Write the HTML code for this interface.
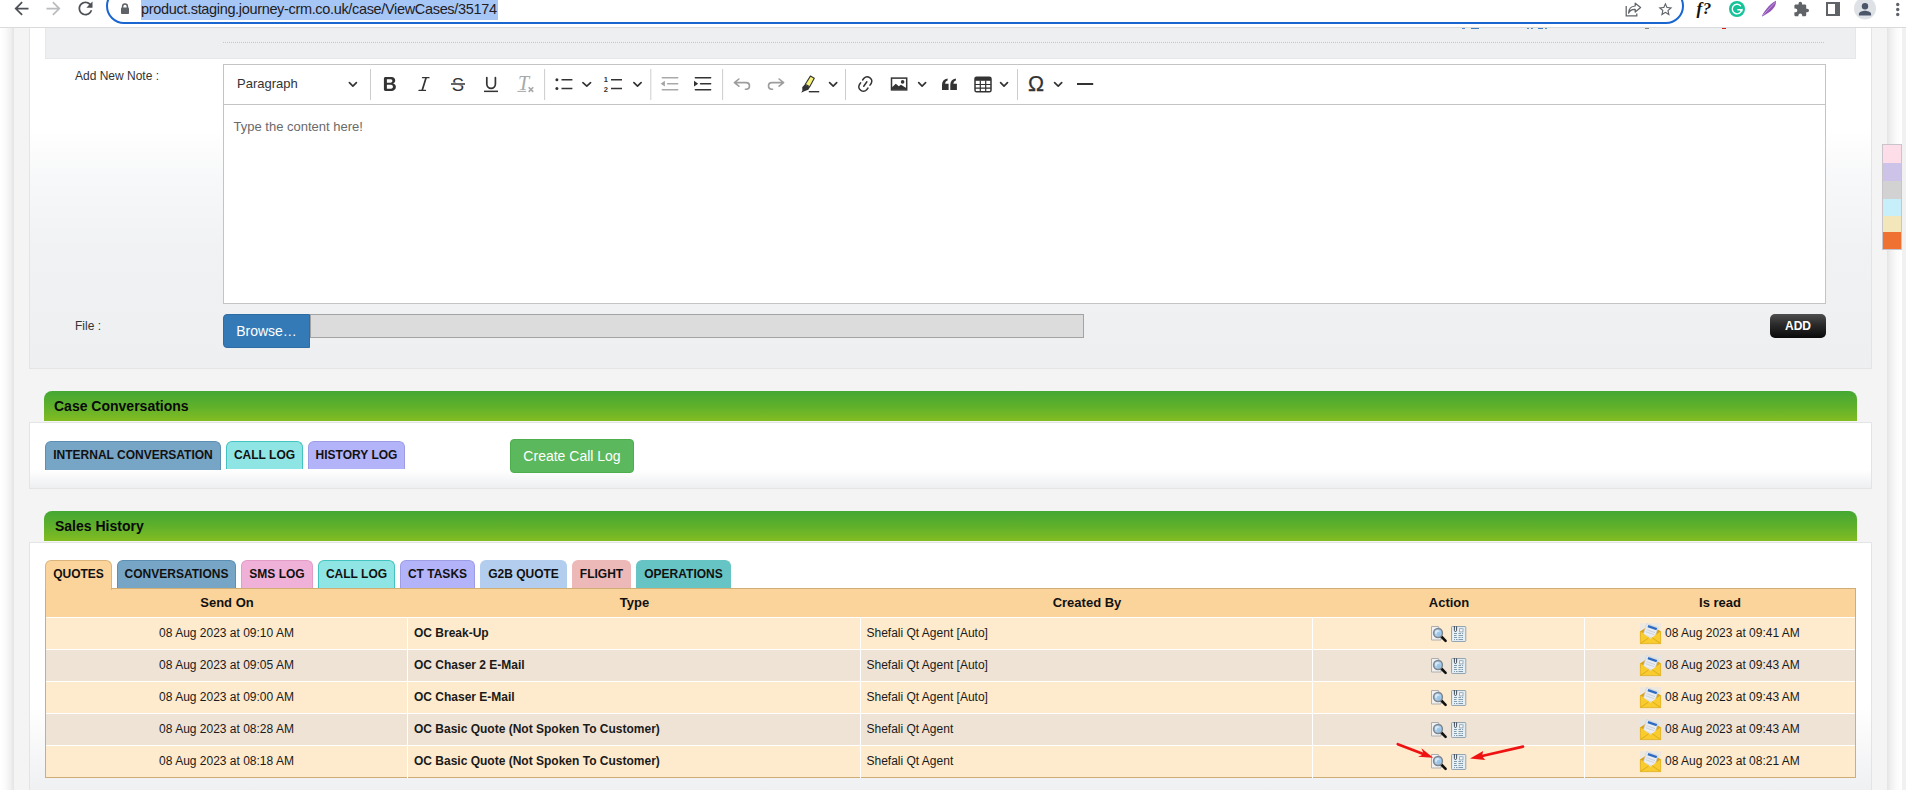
<!DOCTYPE html>
<html lang="en">
<head>
<meta charset="utf-8">
<title>View Case 35174</title>
<style>
*{box-sizing:border-box;margin:0;padding:0}
html,body{width:1906px;height:790px;overflow:hidden;background:#fff}
body{position:relative;font-family:"Liberation Sans",Arial,sans-serif;font-size:12px;color:#222}
.abs{position:absolute}
/* ---------- browser chrome ---------- */
#chrome{position:absolute;left:0;top:0;width:1906px;height:28px;background:#fff;border-bottom:1px solid #d9dadc;z-index:20}
#pill{position:absolute;left:106px;top:-12px;width:1578px;height:36px;border:2px solid #1a66d1;border-radius:18px;background:#fff}
#urlsel{position:absolute;left:141px;top:0;width:357px;height:20px;background:#a6c6f6}
#url{position:absolute;left:141px;top:0px;height:19px;line-height:19px;font-size:14.5px;color:#1f2023;white-space:nowrap;letter-spacing:-0.335px}
#chrome svg{position:absolute;overflow:visible}
/* ---------- page ---------- */
#page{position:absolute;left:0;top:28px;width:1906px;height:762px;overflow:hidden;background:#fff}
#shadL{position:absolute;left:0;top:0;width:14px;height:762px;background:linear-gradient(to right,#ffffff 0%,#fbfbfb 35%,#f0f0f0 75%,#e4e4e4 100%)}
#wrap{position:absolute;left:14px;top:0;width:1874px;height:762px;background:#f4f4f4}
#shadR{position:absolute;left:1887px;top:0;width:15px;height:762px;background:linear-gradient(to right,#e4e4e4 0%,#f0f0f0 25%,#fbfbfb 65%,#ffffff 100%)}
#sbar{position:absolute;left:1902px;top:0;width:4px;height:762px;background:#f1f1f1}

/* ---------- note panel ---------- */
#box1{position:absolute;left:29px;top:-40px;width:1843px;height:381px;border:1px solid #e3e4e6;background:linear-gradient(to bottom,#ffffff 0%,#ffffff 37%,#f7f8f9 50%,#f1f2f4 68%,#eeeff1 100%)}
#prev{position:absolute;left:45px;top:-20px;width:1811px;height:51px;background:#eeeff1;border:1px solid #e6e7e9}
#dots{position:absolute;left:223px;top:14px;width:1602px;height:1px;background:repeating-linear-gradient(to right,#c6c7c9 0,#c6c7c9 1px,transparent 1px,transparent 2px)}
.mk{position:absolute;top:0;height:1px}
.lbl{position:absolute;font-size:12px;color:#333;white-space:nowrap;line-height:14px}
#ed{position:absolute;left:223px;top:36px;width:1603px;height:240px;background:#fff;border:1px solid #c4c4c4}
#edbar{position:absolute;left:0;top:0;width:1601px;height:40px;border-bottom:1px solid #c4c4c4;background:#fff}
#edbar svg{position:absolute;overflow:visible}
#para{position:absolute;left:13px;top:11px;font-size:13px;line-height:16px;color:#333}
#ph{position:absolute;left:9.5px;top:54px;font-size:13px;line-height:16px;color:#6a6a6a;white-space:nowrap}
#browse{position:absolute;left:223px;top:286px;width:87px;height:34px;background:#337ab7;border:1px solid #2e6da4;border-radius:4px 0 0 4px;color:#fff;font-size:14px;line-height:32px;text-align:center}
#finput{position:absolute;left:310px;top:286px;width:774px;height:24px;background:#dcdcdc;border:1px solid #a3a3a3}
#add{position:absolute;left:1770px;top:286px;width:56px;height:24px;border-radius:5px;background:linear-gradient(to bottom,#4e4e4e 0%,#2a2a2a 45%,#0a0a0a 100%);color:#fff;font-weight:bold;font-size:12px;line-height:24px;text-align:center}
/* ---------- green section headers ---------- */
.ghead{position:absolute;left:44px;width:1813px;height:30px;border-radius:8px 8px 0 0;background:linear-gradient(to bottom,#44a733 0%,#5fb02b 50%,#82bc22 100%);font-weight:bold;font-size:14px;color:#0a0a0a;line-height:30px;padding-left:10px;white-space:nowrap}
.wbox{position:absolute;left:29px;width:1843px;border:1px solid #e3e4e6;background:#fff}
.tab{position:absolute;height:29px;border:1px solid;border-bottom:none;border-radius:6px 6px 0 0;font-weight:bold;font-size:12px;line-height:27px;text-align:center;color:#111;white-space:nowrap}
#ccl{position:absolute;left:510px;top:411px;width:124px;height:34px;background:#5cb85c;border:1px solid #4cae4c;border-radius:4px;color:#fff;font-size:14px;line-height:32px;text-align:center}

/* ---------- sales table ---------- */
#tbl{position:absolute;left:45px;top:560px;width:1811px;height:190px;border:1px solid #d1ad76;background:#fff}
#thead{position:absolute;left:0;top:0;width:1809px;height:28px;background:#fbd49b}
#thead div{position:absolute;top:0;height:28px;line-height:27px;text-align:center;font-weight:bold;font-size:13px;color:#111}
.row{position:absolute;left:0;width:1809px;height:31px}
.row.o{background:#feeacc}
.row.e{background:#efe3d5}
.row div{position:absolute;top:0;height:31px;line-height:30px;font-size:12px;color:#1a1a1a;white-space:nowrap}
.row .vs{top:0;width:1px;height:32px;background:#fff}
.row .c1{left:0;width:361px;text-align:center}
.row .c2{left:368px;font-weight:bold}
.row .c3{left:820.5px}
.row .c5{left:1619px}
.row svg{position:absolute;overflow:visible}
</style>
</head>
<body>
<div id="chrome">
  <div id="pill"></div>
  <div id="urlsel"></div>

  <svg style="left:10.5px;top:-2px" width="21" height="21" viewBox="0 0 24 24"><path fill="#4d5156" d="M20 11H7.83l5.59-5.59L12 4l-8 8 8 8 1.41-1.41L7.83 13H20v-2z"/></svg>
  <svg style="left:42.5px;top:-2px" width="21" height="21" viewBox="0 0 24 24"><path fill="#babcbe" d="M12 4l-1.41 1.41L16.17 11H4v2h12.17l-5.58 5.59L12 20l8-8z"/></svg>
  <svg style="left:74.5px;top:-2px" width="21" height="21" viewBox="0 0 24 24"><path fill="#4d5156" d="M17.65 6.35C16.2 4.9 14.21 4 12 4c-4.42 0-7.99 3.58-7.99 8s3.57 8 7.99 8c3.73 0 6.84-2.55 7.73-6h-2.08c-.82 2.33-3.04 4-5.65 4-3.31 0-6-2.69-6-6s2.69-6 6-6c1.66 0 3.14.69 4.22 1.78L13 11h7V4l-2.35 2.35z"/></svg>
  <svg style="left:120px;top:3px" width="10" height="12" viewBox="0 0 10 12"><path fill="none" stroke="#5f6368" stroke-width="1.5" d="M2.6 5V3.4a2.4 2.4 0 0 1 4.8 0V5"/><rect x="1" y="4.6" width="8" height="6.4" rx="0.8" fill="#5f6368"/></svg>
  <svg style="left:1625px;top:2px" width="17" height="15" viewBox="0 0 17 15"><path fill="none" stroke="#5f6368" stroke-width="1.25" stroke-linejoin="round" d="M10.2 1.2 15.6 5.6 10.2 10V7.3C6.6 7.1 4.6 8.6 3.6 11.2 3.7 6.9 6 4.3 10.2 4z"/><path fill="none" stroke="#5f6368" stroke-width="1.25" d="M1.2 4v9.8h10.6v-2.4"/></svg>
  <svg style="left:1656.6px;top:1.1px" width="16.8" height="16.8" viewBox="0 0 24 24"><path fill="#5f6368" d="M22 9.24l-7.19-.62L12 2 9.19 8.63 2 9.24l5.46 4.73L5.820 21 12 17.27 18.18 21l-1.63-7.03L22 9.24zM12 15.4l-3.76 2.27 1-4.28-3.32-2.88 4.380-.38L12 6.1l1.71 4.04 4.380.38-3.32 2.88 1 4.28L12 15.400z"/></svg>
  <div style="position:absolute;left:1696.5px;top:-1px;font-family:'Liberation Serif','DejaVu Serif',serif;font-style:italic;font-weight:bold;font-size:17px;line-height:20px;color:#111;letter-spacing:0.5px">f?</div>
  <svg style="left:1729px;top:1px" width="16" height="16" viewBox="0 0 16 16"><circle cx="8" cy="8" r="8" fill="#15c39a"/><path fill="none" stroke="#fff" stroke-width="1.400" stroke-linecap="round" d="M11.500 4.700A4.800 4.800 0 1 0 12.800 8.700H8.800"/><path fill="#fff" d="M13.300 7.400 13.700 10.600 10.900 9.700z"/></svg>
  <svg style="left:1761px;top:0px" width="16" height="17" viewBox="0 0 16 17"><path fill="#9255b8" d="M15 .8C15.300 4.800 13.200 8.700 9.300 11.400 6.900 13 4.200 14.500 1.300 16.400L.9 15.800C2.100 13.400 3.400 11.300 5.400 8.900 8 5.700 11.300 2.600 15 .8z"/><path fill="none" stroke="#c9a6e0" stroke-width=".8" d="M1.600 15.600C5.500 11.500 10 6.600 14.300 2.200"/></svg>
  <svg style="left:1792.6px;top:1.3px" width="16.7" height="16.700" viewBox="0 0 24 24"><path fill="#5f6368" d="M20.500 11H19V7c0-1.100-.9-2-2-2h-4V3.500C13 2.120 11.880 1 10.500 1S8 2.120 8 3.500V5H4c-1.100 0-1.990.9-1.990 2v3.800H3.500c1.490 0 2.700 1.210 2.700 2.700s-1.210 2.700-2.700 2.700H2V20c0 1.100.9 2 2 2h3.800v-1.500c0-1.490 1.210-2.700 2.700-2.700 1.490 0 2.700 1.210 2.700 2.700V22H17c1.100 0 2-.9 2-2v-4h1.500c1.380 0 2.500-1.120 2.500-2.500S21.880 11 20.500 11z"/></svg>
  <svg style="left:1826px;top:2px" width="14" height="14" viewBox="0 0 14 14"><rect x="1" y="1" width="12" height="12" fill="#fff" stroke="#5f6368" stroke-width="2"/><rect x="9" y="0" width="5" height="14" fill="#5f6368"/></svg>
  <svg style="left:1854px;top:-3px" width="22" height="22" viewBox="0 0 22 22"><circle cx="11" cy="11.400" r="11" fill="#dee1e6"/><circle cx="11" cy="9.200" r="3.200" fill="#4c566a"/><path fill="#4c566a" d="M4.900 18.400v-1.400c0-2.100 4.100-3.200 6.100-3.200s6.100 1.100 6.100 3.200v1.400z"/></svg>
  <svg style="left:1895px;top:2px" width="6" height="15" viewBox="0 0 6 15"><circle cx="2.700" cy="2.500" r="1.700" fill="#5f6368"/><circle cx="2.700" cy="7.500" r="1.700" fill="#5f6368"/><circle cx="2.700" cy="12.500" r="1.700" fill="#5f6368"/></svg>
  <div id="url">product.staging.journey-crm.co.uk/case/ViewCases/35174</div>
</div>
<div id="page">
  <div id="shadL"></div>
  <div id="wrap"></div>
  <div id="shadR"></div>
  <div id="sbar"></div>

  <div id="box1"></div>
  <div id="prev"></div>
  <div id="dots"></div>
  <div class="mk" style="left:1462px;width:3px;background:#5b8fc4"></div>
  <div class="mk" style="left:1471px;width:8px;background:#3f7fbd"></div>
  <div class="mk" style="left:1527px;width:2px;background:#5b8fc4"></div>
  <div class="mk" style="left:1531px;width:2px;background:#5b8fc4"></div>
  <div class="mk" style="left:1538px;width:5px;background:#3f7fbd"></div>
  <div class="mk" style="left:1545px;width:2px;background:#5b8fc4"></div>
  <div class="mk" style="left:1645px;width:4px;background:#8c8377"></div>
  <div class="mk" style="left:1722px;width:4px;background:#d51b1b"></div>

  <div class="lbl" style="left:75px;top:41px">Add New Note :</div>
  <div id="ed">
    <div id="edbar">
      <div id="para">Paragraph</div>
      <svg style="left:0;top:0" width="1601" height="40" viewBox="224 65 1601 40"><rect x="370.0" y="69" width="1" height="31" fill="#cdcdcd"/><rect x="544.1" y="69" width="1" height="31" fill="#cdcdcd"/><rect x="650.3" y="69" width="1" height="31" fill="#cdcdcd"/><rect x="722.1" y="69" width="1" height="31" fill="#cdcdcd"/><rect x="845.0" y="69" width="1" height="31" fill="#cdcdcd"/><rect x="1017.0" y="69" width="1" height="31" fill="#cdcdcd"/><path d="M349.4 82.7L352.9 86.1L356.4 82.7" fill="none" stroke="#333" stroke-width="1.7" stroke-linecap="round" stroke-linejoin="round"/><path d="M582.9 82.7L586.8 86.1L590.6 82.7" fill="none" stroke="#333" stroke-width="1.7" stroke-linecap="round" stroke-linejoin="round"/><path d="M633.9 82.7L637.5 86.1L641.1 82.7" fill="none" stroke="#333" stroke-width="1.7" stroke-linecap="round" stroke-linejoin="round"/><path d="M829.6 82.7L833.2 86.1L836.7 82.7" fill="none" stroke="#333" stroke-width="1.7" stroke-linecap="round" stroke-linejoin="round"/><path d="M918.7 82.7L922.1 86.1L925.6 82.7" fill="none" stroke="#333" stroke-width="1.7" stroke-linecap="round" stroke-linejoin="round"/><path d="M1000.6 82.7L1004.0 86.1L1007.5 82.7" fill="none" stroke="#333" stroke-width="1.7" stroke-linecap="round" stroke-linejoin="round"/><path d="M1054.6 82.7L1058.2 86.1L1061.7 82.7" fill="none" stroke="#333" stroke-width="1.7" stroke-linecap="round" stroke-linejoin="round"/><g transform="translate(379.9,74)"><path fill="#333" d="M10.187 17H5.773c-.637 0-1.092-.138-1.364-.415-.273-.277-.409-.718-.409-1.323V4.738c0-.617.14-1.062.419-1.332.279-.27.73-.406 1.354-.406h4.68c.69 0 1.288.041 1.793.124.506.083.96.242 1.36.478.341.197.644.447.906.75a3.262 3.262 0 0 1 .808 2.162c0 1.401-.722 2.426-2.167 3.075C15.05 10.175 16 11.315 16 13.01a3.756 3.756 0 0 1-2.296 3.504 6.1 6.1 0 0 1-1.517.377c-.571.073-1.238.11-2 .11zm-.217-6.217H7v4.087h3.069c1.977 0 2.965-.69 2.965-2.072 0-.707-.256-1.22-.768-1.537-.512-.319-1.277-.478-2.296-.478zM7 5.130v3.619h2.606c.729 0 1.292-.067 1.69-.2a1.600 1.600 0 0 0 .91-.765c.165-.267.247-.566.247-.897 0-.707-.26-1.176-.778-1.409-.519-.232-1.310-.348-2.375-.348H7z"/></g><g fill="none" stroke="#333" stroke-linecap="round"><path d="M422.500 77.700H429" stroke-width="1.300"/><path d="M419 90.400H425.500" stroke-width="1.300"/><path d="M426 77.900L422.200 90.200" stroke-width="1.700"/></g><text x="458" y="90.700" font-family="Liberation Sans, Arial, sans-serif" font-size="18.500" text-anchor="middle" fill="#333">S</text><rect x="450" y="82.600" width="16" height="2.800" fill="#fff"/><rect x="451" y="83.250" width="14" height="1.500" fill="#333"/><path d="M486.800 77.600v6.400a4.300 4.300 0 0 0 8.600 0v-6.400" fill="none" stroke="#333" stroke-width="1.700" stroke-linecap="round"/><rect x="484" y="90.600" width="14" height="1.500" fill="#333"/><text x="518" y="90" font-family="Liberation Serif, DejaVu Serif, serif" font-style="italic" font-size="20" fill="#a8a8a8">T</text><rect x="517.400" y="90.900" width="8.800" height="1" fill="#a8a8a8"/><path d="M528.700 87.300l4.500 4.600M533.200 87.300l-4.500 4.600" stroke="#a8a8a8" stroke-width="1.600" fill="none"/><circle cx="556.900" cy="79.700" r="1.500" fill="#333"/><circle cx="556.900" cy="88.500" r="1.500" fill="#333"/><path d="M561.500 79.700H572.400M561.500 88.500H572.400" stroke="#333" stroke-width="1.500" fill="none"/><text x="603.800" y="82.300" font-family="Liberation Sans, Arial, sans-serif" font-weight="bold" font-size="7.500" fill="#333">1</text><text x="603.800" y="91.800" font-family="Liberation Sans, Arial, sans-serif" font-weight="bold" font-size="7.500" fill="#333">2</text><path d="M611 79.700H622M611 88.500H622" stroke="#333" stroke-width="1.500" fill="none"/><path d="M662.300 77.700H677.700M667.600 83.700H677.700M662.300 89.700H677.700" stroke="#a9a9a9" stroke-width="1.500" stroke-linecap="round" fill="none"/><path d="M660.700 83.700l4.200-2.900v5.800z" fill="#a3a3a3"/><path d="M695.400 77.700H710.600M700.600 83.700H710.600M695.400 89.700H710.600" stroke="#333" stroke-width="1.600" stroke-linecap="round" fill="none"/><path d="M698.200 83.700l-4.200-2.900v5.800z" fill="#333"/><path d="M738.900 79L734.400 82.600L738.900 86.200M734.600 82.600H746.200a3.300 3.300 0 0 1 0 6.600h-.8" stroke="#9d9d9d" stroke-width="1.600" fill="none" stroke-linecap="round" stroke-linejoin="round"/><path d="M779.100 79L783.600 82.600L779.100 86.200M783.400 82.600H771.800a3.300 3.300 0 0 0 0 6.600h.8" stroke="#9d9d9d" stroke-width="1.600" fill="none" stroke-linecap="round" stroke-linejoin="round"/><g><path d="M810.400 76.100L814.300 78.200L809.700 86.700L805.300 84.300Z" fill="#f6f27a" stroke="#333" stroke-width="1.100" stroke-linejoin="round"/><path d="M804.700 84.500L809.900 87.300L808.300 89.800L804.300 91.200L801.200 92.800L802.400 90.400L802.200 87.200Z" fill="#333"/><rect x="808.800" y="91" width="10.400" height="1.400" fill="#333"/></g><g transform="translate(855.300,74)"><path fill="#333" d="m11.077 15 .991-1.416a.75.75 0 1 1 1.229.860l-1.148 1.640a.748.748 0 0 1-.217.206 5.251 5.251 0 0 1-8.503-5.955.741.741 0 0 1 .12-.274l1.147-1.639a.75.75 0 1 1 1.228.860L4.933 10.700l.006.003a3.750 3.750 0 0 0 6.132 4.294l.006.004zm5.494-5.335a.748.748 0 0 1-.12.274l-1.147 1.639a.75.75 0 1 1-1.228-.860l.860-1.230a3.750 3.750 0 0 0-6.144-4.301l-.860 1.229a.75.75 0 0 1-1.229-.860l1.148-1.640a.748.748 0 0 1 .217-.206 5.251 5.251 0 0 1 8.503 5.955zm-4.563-2.532a.75.75 0 0 1 .184 1.045l-3.155 4.505a.75.75 0 1 1-1.229-.860l3.155-4.506a.75.75 0 0 1 1.045-.184z"/></g><rect x="891.500" y="78.100" width="15.200" height="11.800" fill="#fff" stroke="#333" stroke-width="1.500"/><path d="M892 89.500v-2.200l3.800-3.600 3 2.600 2.200-1.600 5.200 3.200v1.600z" fill="#333"/><circle cx="902.600" cy="81.900" r="1.800" fill="#333"/><path transform="translate(942,78.500)" d="M0 11.500V6.200C0 2.800 1.900.600 5.600 0V1.900C4 2.400 3.200 3.500 3.100 5.300H6.600V11.500Z" fill="#333"/><path transform="translate(950.300,78.500)" d="M0 11.500V6.200C0 2.800 1.900.600 5.600 0V1.900C4 2.400 3.200 3.500 3.100 5.300H6.600V11.500Z" fill="#333"/><rect x="975" y="77.200" width="16" height="14.600" rx="1.600" fill="#fff" stroke="#333" stroke-width="1.500"/><rect x="975" y="77.200" width="16" height="3.600" fill="#333"/><path d="M980.300 80.500V91.800M985.700 80.500V91.800M975 84.500H991M975 88.200H991" stroke="#333" stroke-width="1.200" fill="none"/><text x="1036" y="91" font-family="Liberation Sans, Arial, sans-serif" font-size="21.500" text-anchor="middle" fill="#333" stroke="#333" stroke-width=".25">&#937;</text><rect x="1077" y="83" width="16.200" height="2" fill="#333"/></svg>
    </div>
    <div id="ph">Type the content here!</div>
  </div>
  <div class="lbl" style="left:75px;top:291px">File :</div>
  <div id="browse">Browse&#8230;</div>
  <div id="finput"></div>
  <div id="add">ADD</div>

  <div class="ghead" style="top:363px">Case Conversations</div>
  <div class="wbox" style="top:394px;height:67px;background:linear-gradient(to bottom,#fff 0%,#fff 72%,#eeeff1 100%)"></div>
  <div class="tab" style="left:45px;top:413px;width:176px;height:29px;background:#77a5c6;border-color:#5d8fb4">INTERNAL CONVERSATION</div>
  <div class="tab" style="left:226px;top:413px;width:77px;height:28px;background:#8ee5e3;border-color:#45c3c0">CALL LOG</div>
  <div class="tab" style="left:308px;top:413px;width:97px;height:28px;background:#b3b3fa;border-color:#9d9de6">HISTORY LOG</div>
  <div id="ccl">Create Call Log</div>

  <div class="ghead" style="top:483px;padding-left:11px">Sales History</div>
  <div class="wbox" style="top:514px;height:300px;background:linear-gradient(to bottom,#fff 0%,#fff 55%,#eeeff1 85%)"></div>
  <div class="tab" style="left:45px;top:532px;width:67px;height:30px;z-index:3;background:#fbd49b;border-color:#d9b47c">QUOTES</div>
  <div class="tab" style="left:117px;top:532px;width:119px;height:28px;background:#77a5c6;border-color:#5d8fb4">CONVERSATIONS</div>
  <div class="tab" style="left:241px;top:532px;width:72px;height:28px;background:#f0b1d8;border-color:#e39bc8">SMS LOG</div>
  <div class="tab" style="left:318px;top:532px;width:77px;height:28px;background:#8ee5e3;border-color:#45c3c0">CALL LOG</div>
  <div class="tab" style="left:400px;top:532px;width:75px;height:28px;background:#b3b3fa;border-color:#9d9de6">CT TASKS</div>
  <div class="tab" style="left:480px;top:532px;width:87px;height:28px;background:#b3cdee;border-color:#b3cdee">G2B QUOTE</div>
  <div class="tab" style="left:572px;top:532px;width:59px;height:28px;background:#edb8b8;border-color:#edb8b8">FLIGHT</div>
  <div class="tab" style="left:636px;top:532px;width:95px;height:28px;background:#67c4c4;border-color:#67c4c4">OPERATIONS</div>
  <div id="tbl">
    <div id="thead"><div style="left:0;width:362px">Send On</div><div style="left:362px;width:453px">Type</div><div style="left:815px;width:452px">Created By</div><div style="left:1267px;width:272px">Action</div><div style="left:1539px;width:270px">Is read</div></div>
    <div class="row o" style="top:29px"><div class="c1">08 Aug 2023 at 09:10 AM</div><div class="c2">OC Break-Up</div><div class="c3">Shefali Qt Agent [Auto]</div><svg style="left:1385px;top:8px" width="16" height="16" viewBox="0 0 16 16"><path d="M.5.500h7l2.500 2.500v11H.5z" fill="#f1f1f1" stroke="#aeaeae" stroke-width="1"/><path d="M7.500.500v2.500h2.500" fill="#fafafa" stroke="#b3b3b3" stroke-width=".8"/><path d="M10.300 10.500l4.300 4.300" stroke="#111" stroke-width="2.600" stroke-linecap="round"/><circle cx="7" cy="7" r="4.400" fill="#a9cdeb" stroke="#7d848c" stroke-width="1.500"/><circle cx="6.300" cy="6.200" r="2.300" fill="#d6e9f8"/><circle cx="7.600" cy="7.700" r="2" fill="#8dbbe3" opacity=".7"/></svg><svg style="left:1405px;top:8px" width="16" height="16" viewBox="0 0 16 16"><rect x=".5" y=".500" width="14.300" height="15" rx=".8" fill="#dde8ee" stroke="#93a6b2" stroke-width="1"/><rect x="1.600" y="1.600" width="12.100" height="12.800" fill="#eaf1f5"/><path d="M3.400 0v4.400a1.100 1.100 0 0 0 2.200 0V.300" fill="none" stroke="#3f4c57" stroke-width="1"/><rect x="8.600" y="2.700" width="3.400" height="3.200" fill="#f7fafc" stroke="#8fa4b1" stroke-width=".9"/><path d="M3 7.500h3M7.500 7.500h2.500M11 7.500h1.200M3 9.500h2.500M7.500 9.500h4.600M3 11.500h3M7.500 11.500h2M10.500 11.500h1.600M3 13.500h1M5 13.500h1.500M7.500 13.500h4.600" stroke="#7f9bad" stroke-width="1" fill="none"/></svg><svg style="left:1594px;top:5px" width="21" height="21" viewBox="0 0 21 21"><rect x="0" y="0" width="21" height="10" fill="#e3e6ea" opacity=".6"/><path d="M.4 8.200L10.500 1.800 20.600 8.200V12H.4z" fill="#d9a21a"/><path d="M6.800.700L18.200 4.600 14.400 15.600 3 11.700z" fill="#e9edf1" stroke="#c2c9d1" stroke-width=".5"/><path d="M8.300 1.900L17.200 5 16.400 7.300 7.500 4.200z" fill="#2d6cc2"/><path d="M6.400 6.600l8.600 3M5.700 8.700l8.600 3" stroke="#c5ccd4" stroke-width=".8"/><path d="M.4 8.200L10.500 15.800 20.600 8.200V20.600H.4z" fill="#f8cb2e"/><path d="M.4 20.600L8.600 14.900M20.600 20.600L12.400 14.900" stroke="#dba915" stroke-width=".9" fill="none"/><path d="M.4 8.200V20.600H20.600V8.200" fill="none" stroke="#e0ad18" stroke-width=".8"/></svg><div class="c5">08 Aug 2023 at 09:41 AM</div><div class="vs" style="left:361px"></div><div class="vs" style="left:814px"></div><div class="vs" style="left:1266px"></div><div class="vs" style="left:1538px"></div></div>
    <div class="row e" style="top:61px"><div class="c1">08 Aug 2023 at 09:05 AM</div><div class="c2">OC Chaser 2 E-Mail</div><div class="c3">Shefali Qt Agent [Auto]</div><svg style="left:1385px;top:8px" width="16" height="16" viewBox="0 0 16 16"><path d="M.5.500h7l2.500 2.500v11H.5z" fill="#f1f1f1" stroke="#aeaeae" stroke-width="1"/><path d="M7.500.500v2.500h2.500" fill="#fafafa" stroke="#b3b3b3" stroke-width=".8"/><path d="M10.300 10.500l4.300 4.300" stroke="#111" stroke-width="2.600" stroke-linecap="round"/><circle cx="7" cy="7" r="4.400" fill="#a9cdeb" stroke="#7d848c" stroke-width="1.500"/><circle cx="6.300" cy="6.200" r="2.300" fill="#d6e9f8"/><circle cx="7.600" cy="7.700" r="2" fill="#8dbbe3" opacity=".7"/></svg><svg style="left:1405px;top:8px" width="16" height="16" viewBox="0 0 16 16"><rect x=".5" y=".500" width="14.300" height="15" rx=".8" fill="#dde8ee" stroke="#93a6b2" stroke-width="1"/><rect x="1.600" y="1.600" width="12.100" height="12.800" fill="#eaf1f5"/><path d="M3.400 0v4.400a1.100 1.100 0 0 0 2.200 0V.300" fill="none" stroke="#3f4c57" stroke-width="1"/><rect x="8.600" y="2.700" width="3.400" height="3.200" fill="#f7fafc" stroke="#8fa4b1" stroke-width=".9"/><path d="M3 7.500h3M7.500 7.500h2.500M11 7.500h1.200M3 9.500h2.500M7.500 9.500h4.600M3 11.500h3M7.500 11.500h2M10.500 11.500h1.600M3 13.500h1M5 13.500h1.500M7.500 13.500h4.600" stroke="#7f9bad" stroke-width="1" fill="none"/></svg><svg style="left:1594px;top:5px" width="21" height="21" viewBox="0 0 21 21"><rect x="0" y="0" width="21" height="10" fill="#e3e6ea" opacity=".6"/><path d="M.4 8.200L10.500 1.800 20.600 8.200V12H.4z" fill="#d9a21a"/><path d="M6.800.700L18.200 4.600 14.400 15.600 3 11.700z" fill="#e9edf1" stroke="#c2c9d1" stroke-width=".5"/><path d="M8.300 1.900L17.200 5 16.400 7.300 7.500 4.200z" fill="#2d6cc2"/><path d="M6.400 6.600l8.600 3M5.700 8.700l8.600 3" stroke="#c5ccd4" stroke-width=".8"/><path d="M.4 8.200L10.500 15.800 20.600 8.200V20.600H.4z" fill="#f8cb2e"/><path d="M.4 20.600L8.600 14.900M20.600 20.600L12.400 14.900" stroke="#dba915" stroke-width=".9" fill="none"/><path d="M.4 8.200V20.600H20.600V8.200" fill="none" stroke="#e0ad18" stroke-width=".8"/></svg><div class="c5">08 Aug 2023 at 09:43 AM</div><div class="vs" style="left:361px"></div><div class="vs" style="left:814px"></div><div class="vs" style="left:1266px"></div><div class="vs" style="left:1538px"></div></div>
    <div class="row o" style="top:93px"><div class="c1">08 Aug 2023 at 09:00 AM</div><div class="c2">OC Chaser E-Mail</div><div class="c3">Shefali Qt Agent [Auto]</div><svg style="left:1385px;top:8px" width="16" height="16" viewBox="0 0 16 16"><path d="M.5.500h7l2.500 2.500v11H.5z" fill="#f1f1f1" stroke="#aeaeae" stroke-width="1"/><path d="M7.500.500v2.500h2.500" fill="#fafafa" stroke="#b3b3b3" stroke-width=".8"/><path d="M10.300 10.500l4.300 4.300" stroke="#111" stroke-width="2.600" stroke-linecap="round"/><circle cx="7" cy="7" r="4.400" fill="#a9cdeb" stroke="#7d848c" stroke-width="1.500"/><circle cx="6.300" cy="6.200" r="2.300" fill="#d6e9f8"/><circle cx="7.600" cy="7.700" r="2" fill="#8dbbe3" opacity=".7"/></svg><svg style="left:1405px;top:8px" width="16" height="16" viewBox="0 0 16 16"><rect x=".5" y=".500" width="14.300" height="15" rx=".8" fill="#dde8ee" stroke="#93a6b2" stroke-width="1"/><rect x="1.600" y="1.600" width="12.100" height="12.800" fill="#eaf1f5"/><path d="M3.400 0v4.400a1.100 1.100 0 0 0 2.200 0V.300" fill="none" stroke="#3f4c57" stroke-width="1"/><rect x="8.600" y="2.700" width="3.400" height="3.200" fill="#f7fafc" stroke="#8fa4b1" stroke-width=".9"/><path d="M3 7.500h3M7.500 7.500h2.500M11 7.500h1.200M3 9.500h2.500M7.500 9.500h4.600M3 11.500h3M7.500 11.500h2M10.500 11.500h1.600M3 13.500h1M5 13.500h1.500M7.500 13.500h4.600" stroke="#7f9bad" stroke-width="1" fill="none"/></svg><svg style="left:1594px;top:5px" width="21" height="21" viewBox="0 0 21 21"><rect x="0" y="0" width="21" height="10" fill="#e3e6ea" opacity=".6"/><path d="M.4 8.200L10.500 1.800 20.600 8.200V12H.4z" fill="#d9a21a"/><path d="M6.800.700L18.200 4.600 14.400 15.600 3 11.700z" fill="#e9edf1" stroke="#c2c9d1" stroke-width=".5"/><path d="M8.300 1.900L17.200 5 16.400 7.300 7.500 4.200z" fill="#2d6cc2"/><path d="M6.400 6.600l8.600 3M5.700 8.700l8.600 3" stroke="#c5ccd4" stroke-width=".8"/><path d="M.4 8.200L10.500 15.800 20.600 8.200V20.600H.4z" fill="#f8cb2e"/><path d="M.4 20.600L8.600 14.900M20.600 20.600L12.400 14.900" stroke="#dba915" stroke-width=".9" fill="none"/><path d="M.4 8.200V20.600H20.600V8.200" fill="none" stroke="#e0ad18" stroke-width=".8"/></svg><div class="c5">08 Aug 2023 at 09:43 AM</div><div class="vs" style="left:361px"></div><div class="vs" style="left:814px"></div><div class="vs" style="left:1266px"></div><div class="vs" style="left:1538px"></div></div>
    <div class="row e" style="top:125px"><div class="c1">08 Aug 2023 at 08:28 AM</div><div class="c2">OC Basic Quote (Not Spoken To Customer)</div><div class="c3">Shefali Qt Agent</div><svg style="left:1385px;top:8px" width="16" height="16" viewBox="0 0 16 16"><path d="M.5.500h7l2.500 2.500v11H.5z" fill="#f1f1f1" stroke="#aeaeae" stroke-width="1"/><path d="M7.500.500v2.500h2.500" fill="#fafafa" stroke="#b3b3b3" stroke-width=".8"/><path d="M10.300 10.500l4.300 4.300" stroke="#111" stroke-width="2.600" stroke-linecap="round"/><circle cx="7" cy="7" r="4.400" fill="#a9cdeb" stroke="#7d848c" stroke-width="1.500"/><circle cx="6.300" cy="6.200" r="2.300" fill="#d6e9f8"/><circle cx="7.600" cy="7.700" r="2" fill="#8dbbe3" opacity=".7"/></svg><svg style="left:1405px;top:8px" width="16" height="16" viewBox="0 0 16 16"><rect x=".5" y=".500" width="14.300" height="15" rx=".8" fill="#dde8ee" stroke="#93a6b2" stroke-width="1"/><rect x="1.600" y="1.600" width="12.100" height="12.800" fill="#eaf1f5"/><path d="M3.400 0v4.400a1.100 1.100 0 0 0 2.200 0V.300" fill="none" stroke="#3f4c57" stroke-width="1"/><rect x="8.600" y="2.700" width="3.400" height="3.200" fill="#f7fafc" stroke="#8fa4b1" stroke-width=".9"/><path d="M3 7.500h3M7.500 7.500h2.500M11 7.500h1.200M3 9.500h2.500M7.500 9.500h4.600M3 11.500h3M7.500 11.500h2M10.500 11.500h1.600M3 13.500h1M5 13.500h1.500M7.500 13.500h4.600" stroke="#7f9bad" stroke-width="1" fill="none"/></svg><svg style="left:1594px;top:5px" width="21" height="21" viewBox="0 0 21 21"><rect x="0" y="0" width="21" height="10" fill="#e3e6ea" opacity=".6"/><path d="M.4 8.200L10.500 1.800 20.600 8.200V12H.4z" fill="#d9a21a"/><path d="M6.800.700L18.200 4.600 14.400 15.600 3 11.700z" fill="#e9edf1" stroke="#c2c9d1" stroke-width=".5"/><path d="M8.300 1.900L17.200 5 16.400 7.300 7.500 4.200z" fill="#2d6cc2"/><path d="M6.400 6.600l8.600 3M5.700 8.700l8.600 3" stroke="#c5ccd4" stroke-width=".8"/><path d="M.4 8.200L10.500 15.800 20.600 8.200V20.600H.4z" fill="#f8cb2e"/><path d="M.4 20.600L8.600 14.900M20.600 20.600L12.400 14.900" stroke="#dba915" stroke-width=".9" fill="none"/><path d="M.4 8.200V20.600H20.600V8.200" fill="none" stroke="#e0ad18" stroke-width=".8"/></svg><div class="c5">08 Aug 2023 at 09:43 AM</div><div class="vs" style="left:361px"></div><div class="vs" style="left:814px"></div><div class="vs" style="left:1266px"></div><div class="vs" style="left:1538px"></div></div>
    <div class="row o" style="top:157px"><div class="c1">08 Aug 2023 at 08:18 AM</div><div class="c2">OC Basic Quote (Not Spoken To Customer)</div><div class="c3">Shefali Qt Agent</div><svg style="left:1385px;top:8px" width="16" height="16" viewBox="0 0 16 16"><path d="M.5.500h7l2.500 2.500v11H.5z" fill="#f1f1f1" stroke="#aeaeae" stroke-width="1"/><path d="M7.500.500v2.500h2.500" fill="#fafafa" stroke="#b3b3b3" stroke-width=".8"/><path d="M10.300 10.500l4.300 4.300" stroke="#111" stroke-width="2.600" stroke-linecap="round"/><circle cx="7" cy="7" r="4.400" fill="#a9cdeb" stroke="#7d848c" stroke-width="1.500"/><circle cx="6.300" cy="6.200" r="2.300" fill="#d6e9f8"/><circle cx="7.600" cy="7.700" r="2" fill="#8dbbe3" opacity=".7"/></svg><svg style="left:1405px;top:8px" width="16" height="16" viewBox="0 0 16 16"><rect x=".5" y=".500" width="14.300" height="15" rx=".8" fill="#dde8ee" stroke="#93a6b2" stroke-width="1"/><rect x="1.600" y="1.600" width="12.100" height="12.800" fill="#eaf1f5"/><path d="M3.400 0v4.400a1.100 1.100 0 0 0 2.200 0V.300" fill="none" stroke="#3f4c57" stroke-width="1"/><rect x="8.600" y="2.700" width="3.400" height="3.200" fill="#f7fafc" stroke="#8fa4b1" stroke-width=".9"/><path d="M3 7.500h3M7.500 7.500h2.500M11 7.500h1.200M3 9.500h2.500M7.500 9.500h4.600M3 11.500h3M7.500 11.500h2M10.500 11.500h1.600M3 13.500h1M5 13.500h1.500M7.500 13.500h4.600" stroke="#7f9bad" stroke-width="1" fill="none"/></svg><svg style="left:1594px;top:5px" width="21" height="21" viewBox="0 0 21 21"><rect x="0" y="0" width="21" height="10" fill="#e3e6ea" opacity=".6"/><path d="M.4 8.200L10.500 1.800 20.600 8.200V12H.4z" fill="#d9a21a"/><path d="M6.800.700L18.200 4.600 14.400 15.600 3 11.700z" fill="#e9edf1" stroke="#c2c9d1" stroke-width=".5"/><path d="M8.300 1.900L17.200 5 16.400 7.300 7.500 4.200z" fill="#2d6cc2"/><path d="M6.400 6.600l8.600 3M5.700 8.700l8.600 3" stroke="#c5ccd4" stroke-width=".8"/><path d="M.4 8.200L10.500 15.800 20.600 8.200V20.600H.4z" fill="#f8cb2e"/><path d="M.4 20.600L8.600 14.900M20.600 20.600L12.400 14.900" stroke="#dba915" stroke-width=".9" fill="none"/><path d="M.4 8.200V20.600H20.600V8.200" fill="none" stroke="#e0ad18" stroke-width=".8"/></svg><div class="c5">08 Aug 2023 at 08:21 AM</div><div class="vs" style="left:361px"></div><div class="vs" style="left:814px"></div><div class="vs" style="left:1266px"></div><div class="vs" style="left:1538px"></div></div>
  </div>


  <svg class="abs" style="left:1390px;top:712px;overflow:visible" width="140" height="40" viewBox="1390 740 140 40"><path d="M1397.800 744.200L1424 754.200" stroke="#ef1212" stroke-width="2.700" stroke-linecap="round" fill="none"/><path d="M1433.200 757.700L1418 756.800L1423.800 754.200L1421.400 748.200Z" fill="#ef1212"/><path d="M1523 746.600L1482 756" stroke="#ef1212" stroke-width="2.700" stroke-linecap="round" fill="none"/><path d="M1470 758.500L1483.200 751L1482 756L1485.200 759.900Z" fill="#ef1212"/></svg>
  <div class="abs" style="left:1882px;top:116px;width:20px;height:106px;border:1px solid #c9c3cc;background:#fff"></div>
  <div class="abs" style="left:1883px;top:117px;width:18px;height:18px;background:#fcdde8"></div>
  <div class="abs" style="left:1883px;top:135px;width:18px;height:18px;background:#cdc3e8"></div>
  <div class="abs" style="left:1883px;top:153px;width:18px;height:18px;background:#d2d2d2"></div>
  <div class="abs" style="left:1883px;top:171px;width:18px;height:17px;background:#c6effa"></div>
  <div class="abs" style="left:1883px;top:188px;width:18px;height:16px;background:#f3e6bb"></div>
  <div class="abs" style="left:1883px;top:204px;width:18px;height:17px;background:#f07232"></div>
</div>
</body>
</html>
